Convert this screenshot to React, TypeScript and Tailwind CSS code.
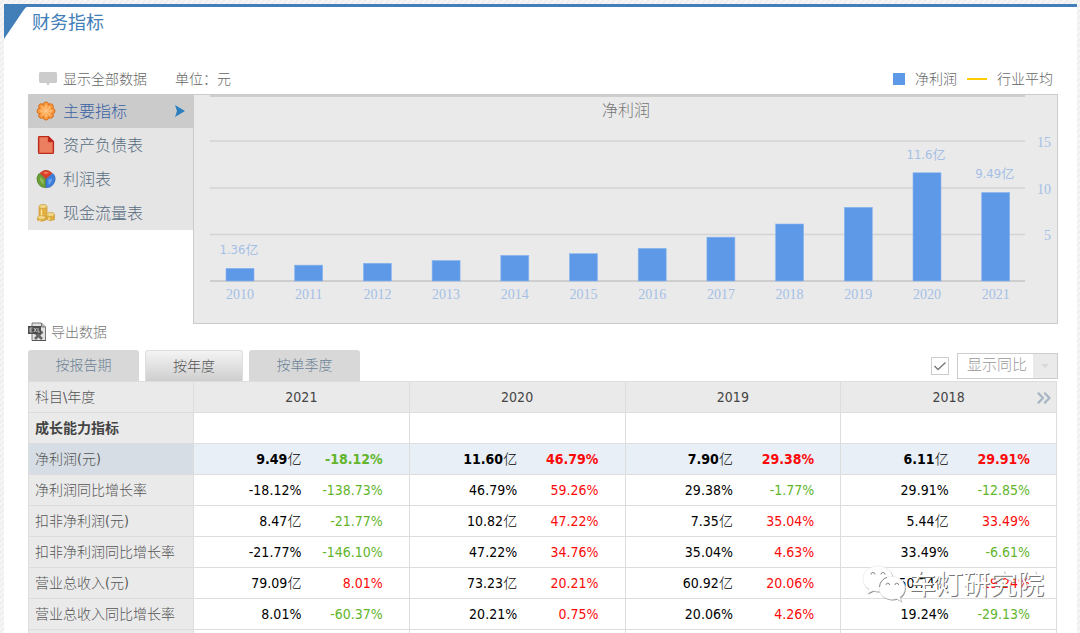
import { ChevronsRight } from 'lucide-react';

const profits = [
  { year: 2010, value: 1.36, label: '1.36亿' },
  { year: 2011, value: 1.7 },
  { year: 2012, value: 1.9 },
  { year: 2013, value: 2.2 },
  { year: 2014, value: 2.75 },
  { year: 2015, value: 2.93 },
  { year: 2016, value: 3.5 },
  { year: 2017, value: 4.7 },
  { year: 2018, value: 6.11 },
  { year: 2019, value: 7.9 },
  { year: 2020, value: 11.6, label: '11.6亿' },
  { year: 2021, value: 9.49, label: '9.49亿' },
];

const years = [2021, 2020, 2019, 2018];

const rows = [
  { name: '净利润(元)', active: true, cells: ['9.49亿', '-18.12%', '11.60亿', '46.79%', '7.90亿', '29.38%', '6.11亿', '29.91%'] },
  { name: '净利润同比增长率', cells: ['-18.12%', '-138.73%', '46.79%', '59.26%', '29.38%', '-1.77%', '29.91%', '-12.85%'] },
  { name: '扣非净利润(元)', cells: ['8.47亿', '-21.77%', '10.82亿', '47.22%', '7.35亿', '35.04%', '5.44亿', '33.49%'] },
  { name: '扣非净利润同比增长率', cells: ['-21.77%', '-146.10%', '47.22%', '34.76%', '35.04%', '4.63%', '33.49%', '-6.61%'] },
  { name: '营业总收入(元)', cells: ['79.09亿', '8.01%', '73.23亿', '20.21%', '60.92亿', '20.06%', '50.74亿', '19.24%'] },
  { name: '营业总收入同比增长率', cells: ['8.01%', '-60.37%', '20.21%', '0.75%', '20.06%', '4.26%', '19.24%', '-29.13%'] },
];

const FlowerIcon = () => (
  <svg width="20" height="20" viewBox="0 0 20 20" aria-hidden="true">
    <g fill="#fb9b42" stroke="#d9701c" strokeWidth="1">
      {[0, 45, 90, 135, 180, 225, 270, 315].map((a) => (
        <path key={a} d="M8.200 9 7.400 3.200Q7.500 1 10 1t2.600 2.200L11.800 9z" transform={`rotate(${a} 10 10)`} />
      ))}
    </g>
    <circle cx="10" cy="10" r="6" fill="#fda850" />
    <path d="M10 4v12M4 10h12M6 6l8 8M14 6l-8 8" stroke="#ffcc94" strokeWidth=".9" />
  </svg>
);

const SheetIcon = () => (
  <svg width="20" height="20" viewBox="0 0 20 20" aria-hidden="true">
    <path d="M3.500 1.500h9l5 5v11a1 1 0 0 1-1 1h-13a1 1 0 0 1-1-1v-15a1 1 0 0 1 1-1z" fill="#e66448" stroke="#b92c20" strokeWidth="1.200" />
    <path d="M4 3h7.500v5H16v9H4z" fill="#ec7f60" />
    <path d="M12.500 1.500v5h5z" fill="#c41e16" stroke="#b92c20" />
  </svg>
);

const PieIcon = () => (
  <svg width="20" height="20" viewBox="0 0 20 20" aria-hidden="true">
    <path d="M10 10 3 4.500A8.600 8.600 0 0 0 9.500 18.600z" fill="#6c9f35" stroke="#4b7a22" strokeWidth=".7" />
    <path d="M10 10v8.600A8.600 8.600 0 0 0 17 4.500z" fill="#3f7fdc" stroke="#275fb1" strokeWidth=".7" />
    <path d="M10 9.500 4 4.200Q10-1.500 16 4.200z" fill="#dc4029" stroke="#b42d1d" strokeWidth=".7" />
    <path d="M7 3.600q3-1.800 6 0L10 5.500z" fill="#f0785c" />
    <path d="M4 8q-.5 5 3.500 7.500V11z" fill="#92bd5e" />
    <path d="M12.500 10.500v5q3.500-2 3.500-6z" fill="#70a3ee" />
  </svg>
);

const CoinsIcon = () => (
  <svg width="20" height="20" viewBox="0 0 20 20" aria-hidden="true">
    <g fill="#e2b03f" stroke="#c8993a" strokeWidth=".7">
      <path d="M3 3.500v12q3.500 2.200 8 0v-12" />
      <ellipse cx="7" cy="3.500" rx="4" ry="2" fill="#f3d888" />
      <path d="M10.500 11.500v5q4 2.200 8 0v-5" />
      <ellipse cx="14.500" cy="11.500" rx="4" ry="2" fill="#f3d888" />
      <path d="M1.500 14.500v2.700q4 2.200 8 0v-2.700" />
      <ellipse cx="5.500" cy="14.500" rx="4" ry="2" fill="#f3d888" />
    </g>
    <path d="M5.500 6.500v6M13 14.500v2.500M4 17v1" stroke="#f9e6a6" strokeWidth="1.300" />
  </svg>
);

const ExcelIcon = () => (
  <svg width="18" height="20" viewBox="0 0 18 20" aria-hidden="true">
    <path d="M4 1h9.500L17.500 5v13.500H4z" fill="#e2e2e2" stroke="#777" />
    <path d="M13.500 1v4h4" fill="#bbb" stroke="#777" />
    <path d="M7 10.500 14 17M14.500 9.500 7 17" stroke="#666" strokeWidth="2.600" />
    <path d="M0 4h13v8H0z" fill="#4d4d4d" />
    <path d="M4.500 6H2v4h2.500M2 8h2M6 6l2.500 4M8.500 6 6 10M10 6v4h2" stroke="#ccc" strokeWidth=".9" fill="none" />
    <path d="M4 18.500h14" stroke="#555" />
  </svg>
);

const menu = [
  { name: '主要指标', icon: FlowerIcon, active: true },
  { name: '资产负债表', icon: SheetIcon },
  { name: '利润表', icon: PieIcon },
  { name: '现金流量表', icon: CoinsIcon },
];

const tabs = [
  { name: '按报告期', style: 'w-[111px] bg-[#d8d8d8] text-[#6b8296]' },
  { name: '按年度', style: 'w-[98px] border border-b-0 border-[#dedede] bg-linear-to-b from-[#f4f4f4] to-[#cecece] text-[#555]' },
  { name: '按单季度', style: 'w-[111px] bg-[#d8d8d8] text-[#6b8296]' },
];

const baseline = 186;
const unit = 9.33;
const step = 68.7;

const ProfitChart = () => (
  <svg viewBox="0 0 863 228" className="block w-full" role="img" aria-label="净利润">
    <g stroke="#cecece">
      <path d="M16 1H831M16 186H831" strokeWidth="2" />
      <path d="M16 46H831M16 93H831M16 139.500H831" strokeWidth="1.500" stroke="#d4d4d4" />
    </g>
    <text x="432" y="21" textAnchor="middle" className="fill-[#777] text-[16px] font-light">净利润</text>
    {profits.map((p, i) => {
      const x = 32 + i * step;
      const top = baseline - p.value * unit;
      return (
        <g key={p.year}>
          <rect x={x} y={top} width="28" height={p.value * unit} fill="#5e99e8" stroke="#8db6ee" strokeWidth=".6" />
          <text x={x + 14} y="204" textAnchor="middle" className="fill-[#a5c0e6] font-['Liberation_Serif',serif] text-[14px]">{p.year}</text>
          {p.label && (
            <text x={x + 13} y={top - 14} textAnchor="middle" className="fill-[#a5c0e6] text-[13px]">{p.label}</text>
          )}
        </g>
      );
    })}
    <g textAnchor="end" className="fill-[#a5c0e6] font-['Liberation_Serif',serif] text-[14px]">
      <text x="857" y="52">15</text>
      <text x="857" y="99">10</text>
      <text x="857" y="145">5</text>
    </g>
  </svg>
);

const DataTable = () => (
  <table className="w-full table-fixed border-collapse text-[14px] leading-5">
    <colgroup>
      <col className="w-[165px]" />
      <col span={8} />
    </colgroup>
    <thead>
      <tr className="h-[31px] bg-[#eaeaea] text-[#444]">
        <th scope="col" className="border border-[#ddd] px-[6px] text-left font-light text-[#555]">科目\年度</th>
        {years.map((y) => (
          <th key={y} scope="col" colSpan={2} className="border border-[#ddd] font-normal">
            {y === 2018 ? (
              <div className="relative">
                {y}
                <button aria-label="更多年度" className="absolute top-0 right-px">
                  <ChevronsRight size={22} strokeWidth={2.5} className="text-[#a9b6c3]" />
                </button>
              </div>
            ) : y}
          </th>
        ))}
      </tr>
    </thead>
    <tbody>
      <tr className="h-[31px]">
        <th scope="row" className="border border-[#ddd] bg-[#eaeaea] px-[6px] text-left font-bold text-[#444]">成长能力指标</th>
        {years.map((y) => <td key={y} colSpan={2} className="border border-[#ddd]"></td>)}
      </tr>
      {rows.map((row) => (
        <tr key={row.name} className={row.active ? 'h-[31px] bg-[#e8eff6] font-bold' : 'h-[31px]'}>
          <th scope="row" className={`border border-[#ddd] px-[6px] text-left font-light whitespace-nowrap text-[#555] ${row.active ? 'bg-[#d6dde4]' : 'bg-[#eaeaea]'}`}>
            {row.name}
          </th>
          {row.cells.map((cell, i) =>
            i % 2 === 0 ? (
              <td key={i} className="border-y border-l border-[#ddd] text-right text-black">
                {cell.replace('亿', '')}
                {cell.endsWith('亿') && <span className="font-light">亿</span>}
              </td>
            ) : (
              <td key={i} className={`border-y border-r border-[#ddd] pr-[26px] text-right ${cell.startsWith('-') ? 'text-[#62b52c]' : 'text-[#fb0a0a]'}`}>
                {cell}
              </td>
            )
          )}
        </tr>
      ))}
      <tr className="h-[31px]">
        <th className="border border-[#ddd] bg-[#eaeaea]"></th>
        {years.map((y) => <td key={y} colSpan={2} className="border border-[#ddd]"></td>)}
      </tr>
    </tbody>
  </table>
);

const Bubbles = () => (
  <>
    <path d="M16 1C7.500 1 1 6.500 1 14c0 4.500 2.500 8 6 10.200L5.500 28.500l5.500-2.700q2.500.8 5 .8C24 26.600 31 21 31 14S24.500 1 16 1z" />
    <path d="M30 11.500c-7.500 0-13 5-13 11.500s5.500 11.500 13 11.500q2.500 0 4.500-.7l5 2.700-1.500-4.300c3-2 5-5.200 5-9.200 0-6.500-5.500-11.500-13-11.500z" />
  </>
);

const Watermark = () => (
  <div className="pointer-events-none absolute right-9 bottom-7 flex items-center gap-[3px]">
    <svg width="44" height="40" viewBox="0 0 44 40" aria-hidden="true">
      <g fill="#888" transform="translate(.8 1)"><Bubbles /></g>
      <g fill="#fff" stroke="#ddd" strokeWidth=".5"><Bubbles /></g>
      <path d="M17.500 22Q18 15 25 12.300" fill="none" stroke="#888" />
      <g fill="none" stroke="#888">
        <path d="M9 9.500a2 2 0 0 1 4 0M19 9.500a2 2 0 0 1 4 0M24 20a1.800 1.800 0 0 1 3.600 0M33 20a1.800 1.800 0 0 1 3.600 0" />
      </g>
    </svg>
    <span className="text-[27px] leading-9 font-normal text-white [text-shadow:1px_1px_0_#777]">车灯研究院</span>
  </div>
);

const App = () => {
  return (
    <div className="relative h-screen overflow-hidden bg-[repeating-linear-gradient(135deg,#f6f6f6_0_2px,#efefef_2px_4px)] pt-1 pr-[3px] pl-1 font-['DejaVu_Sans_Condensed','Noto_Sans_CJK_SC',sans-serif]">
      <main className="min-h-full border-t-3 border-[#427eb8] bg-white">
        <header className="flex h-8 items-start">
          <svg width="24" height="32" viewBox="0 0 24 32" aria-hidden="true">
            <path d="M0 0h22.500Q21 1 19 4L0 32z" fill="#427eb8" />
          </svg>
          <h1 className="ml-1 text-[18px] leading-8 font-normal text-[#427eb8]">财务指标</h1>
        </header>

        <div className="pt-[25px] pr-[19px] pl-6">
          <div className="flex h-[30px] items-center justify-between text-[14px] font-light text-[#666]">
            <div className="flex items-center">
              <button className="flex items-center gap-[6px] pl-[11px]">
                <svg width="18" height="14" viewBox="0 0 18 14" aria-hidden="true">
                  <path d="M1 0h16l1 1v9l-1 1h-6l-2 2.500L7 11H1l-1-1V1z" fill="#ccc" />
                </svg>
                显示全部数据
              </button>
              <span className="ml-7">单位：元</span>
            </div>
            <div className="flex items-center gap-[10px] pr-[5px]">
              <span className="size-3 bg-[#5e99e8]"></span>
              <span>净利润</span>
              <span className="h-[2px] w-5 bg-[#ffcc00]"></span>
              <span>行业平均</span>
            </div>
          </div>

          <section className="flex items-start">
            <nav className="w-[165px] bg-[#e5e5e5] text-[16px] font-light">
              {menu.map(({ name, icon: Icon, active }) => (
                <a key={name} href="#" className={`flex h-[34px] items-center gap-[7px] px-2 ${active ? 'bg-[#cbcbcb] text-[#3a62a5]' : 'text-[#566b80]'}`}>
                  <Icon />
                  <span className="pt-[2px]">{name}</span>
                  {active && (
                    <svg width="10" height="12" viewBox="0 0 10 12" className="ml-auto" aria-hidden="true">
                      <path d="M0 0 10 6 0 12 2 6z" fill="#2c7fbe" />
                    </svg>
                  )}
                </a>
              ))}
            </nav>
            <div className="flex-1 border border-[#cbcbcb] bg-[#eaeaea]">
              <ProfitChart />
            </div>
          </section>

          <div className="mb-[10px] flex h-4 items-center">
            <button className="flex items-center gap-[5px] text-[14px] font-light text-[#777]">
              <ExcelIcon />
              导出数据
            </button>
          </div>

          <div className="flex h-[31px] items-center justify-between">
            <div className="flex h-full gap-[6px]">
              {tabs.map((tab) => (
                <button key={tab.name} className={`rounded-t-[3px] text-[14px] font-light ${tab.style}`}>{tab.name}</button>
              ))}
            </div>
            <div className="flex items-center gap-2">
              <label className="relative flex size-[18px]">
                <input type="checkbox" defaultChecked aria-label="显示同比" className="size-full appearance-none border border-[#ccc] bg-white" />
                <svg width="18" height="18" viewBox="0 0 18 18" className="absolute inset-0" aria-hidden="true">
                  <path d="M3.500 9 7 12.500 14.500 5.500" fill="none" stroke="#777" strokeWidth="1.300" />
                </svg>
              </label>
              <div className="relative flex h-[26px] w-[101px]">
                <select aria-label="同比选项" className="size-full appearance-none border border-[#ccc] bg-white pl-[9px] text-[15px] font-light text-[#999]">
                  <option>显示同比</option>
                </select>
                <span className="pointer-events-none absolute inset-y-px right-px flex w-6 items-center justify-center bg-[#eaeaea]">
                  <svg width="8" height="4" viewBox="0 0 8 4" aria-hidden="true"><path d="M0 0h8L4 4z" fill="#d8d8d8" /></svg>
                </span>
              </div>
            </div>
          </div>

          <div className="pr-px">
            <DataTable />
          </div>
        </div>
      </main>
      <Watermark />
    </div>
  );
};

export default App;
